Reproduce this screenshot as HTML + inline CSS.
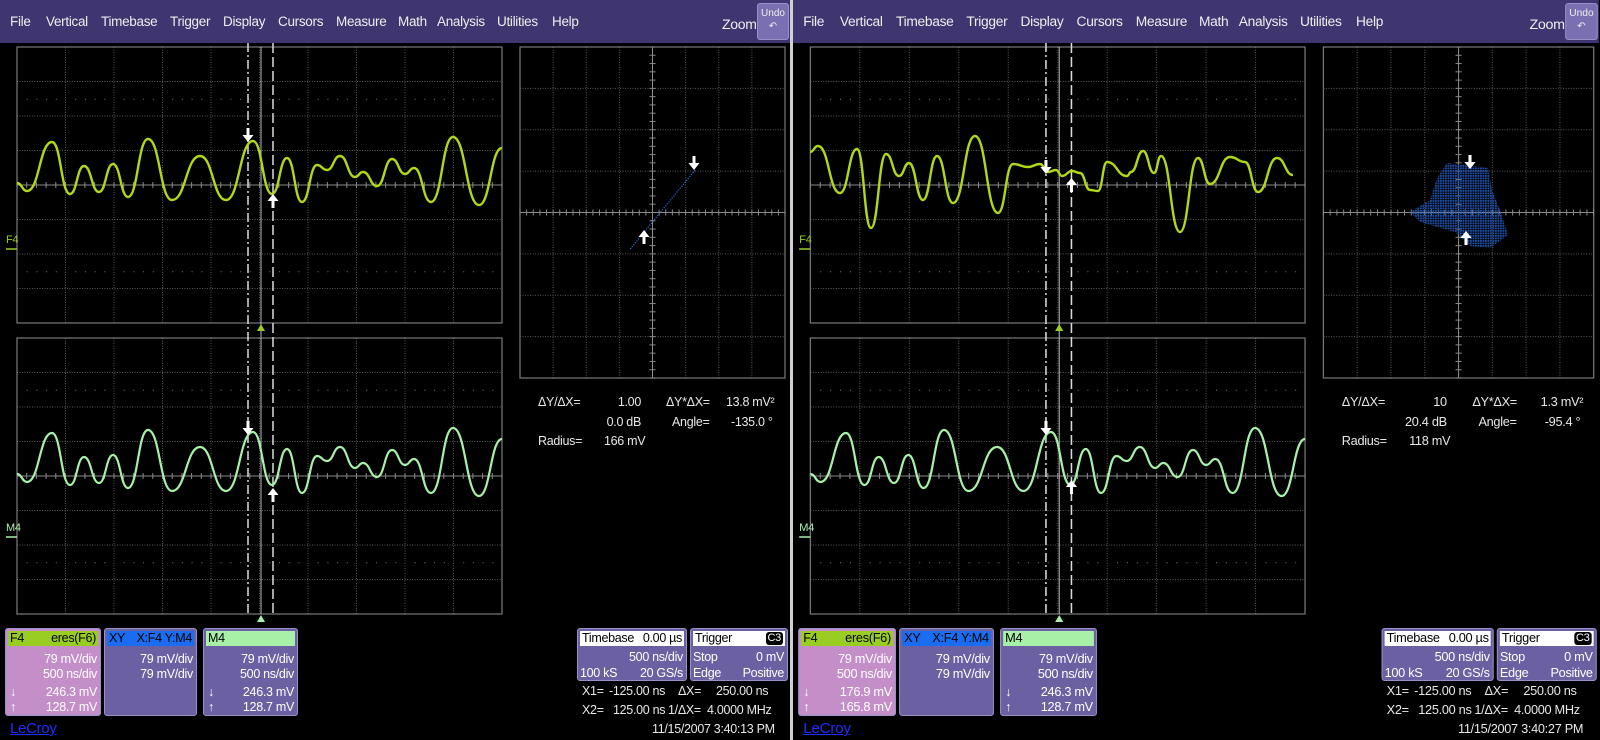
<!DOCTYPE html>
<html><head><meta charset="utf-8">
<style>
*{margin:0;padding:0;box-sizing:border-box}
body{width:1600px;height:740px;background:#000;position:relative;overflow:hidden;font-family:"Liberation Sans",sans-serif;color:#e8e8e8;letter-spacing:-0.3px}
.scr{position:absolute;top:0;width:790px;height:740px;background:#000}
.menu{position:absolute;left:0;top:0;width:790px;height:43px;background:#3f3570;font-size:13.5px;color:#eee}
.menu span{position:absolute;top:14px}
.undo{position:absolute;left:757px;top:3px;width:32px;height:37px;background:#7a6fb0;border:1px solid #9a90c8;border-radius:3px;font-size:10px;text-align:center;line-height:13px;padding-top:3px;letter-spacing:0}
svg.g{position:absolute;left:0;top:0}
.t{position:absolute;font-size:12.5px;white-space:nowrap;line-height:14px}
.box{position:absolute;border-radius:3px;border:1px solid #9a90c8}
.hd{position:absolute;left:2px;right:2px;top:2px;height:15px;font-size:12.5px;line-height:15px;color:#000}
.hd .l{position:absolute;left:2px}.hd .r{position:absolute;right:2px}
.row{position:absolute;left:4px;right:3px;font-size:12.5px;line-height:14px;color:#fff}
.row .l{position:absolute;left:0}.row .r{position:absolute;right:0}
.lc{position:absolute;left:10px;top:720px;font-size:15px;color:#1f2cff;text-decoration:underline}
</style></head><body>

<div class="scr" id="s1" style="left:0">
<svg class="g" width="790" height="740" id="g1"></svg>
<div class="menu"><span style="left:10px">File</span><span style="left:46px">Vertical</span><span style="left:101px">Timebase</span><span style="left:170px">Trigger</span><span style="left:223px">Display</span><span style="left:278px">Cursors</span><span style="left:336px">Measure</span><span style="left:398px">Math</span><span style="left:437px">Analysis</span><span style="left:497px">Utilities</span><span style="left:552px">Help</span><span style="left:722px;top:16px;font-size:14px">Zoom</span><div class="undo">Undo<br>↶</div></div>
<div class="t" style="left:6px;top:233px;color:#9acd22;font-size:11px">F4</div>
<div class="t" style="left:6px;top:521px;color:#a8f0a8;font-size:11px">M4</div>
<div class="t" style="left:538px;top:395px">ΔY/ΔX=</div><div class="t" style="left:600px;width:41px;text-align:right;top:395px">1.00</div>
<div class="t" style="left:666px;top:395px">ΔY*ΔX=</div><div class="t" style="left:726px;top:395px">13.8 mV²</div>
<div class="t" style="left:590px;width:51px;text-align:right;top:415px">0.0 dB</div>
<div class="t" style="left:672px;top:415px">Angle=</div><div class="t" style="left:731px;top:415px">-135.0 °</div>
<div class="t" style="left:538px;top:434px">Radius=</div><div class="t" style="left:604px;top:434px">166 mV</div>
<div class="box" style="left:5px;top:628px;width:96px;height:88px;background:#c48fc8"><div class="hd" style="background:#9acd22"><span class="l">F4</span><span class="r">eres(F6)</span></div>
<div class="row" style="top:23px"><span class="r">79 mV/div</span></div><div class="row" style="top:38px"><span class="r">500 ns/div</span></div>
<div class="row" style="top:56px"><span class="l">↓</span><span class="r">246.3 mV</span></div><div class="row" style="top:71px"><span class="l">↑</span><span class="r">128.7 mV</span></div></div>
<div class="box" style="left:104px;top:628px;width:93px;height:88px;background:#6b60a2"><div class="hd" style="background:#1a6cf0"><span class="l">XY</span><span class="r">X:F4 Y:M4</span></div>
<div class="row" style="top:23px"><span class="r">79 mV/div</span></div><div class="row" style="top:38px"><span class="r">79 mV/div</span></div></div>
<div class="box" style="left:203px;top:628px;width:95px;height:88px;background:#6b60a2"><div class="hd" style="background:#a8f0a8"><span class="l">M4</span></div>
<div class="row" style="top:23px"><span class="r">79 mV/div</span></div><div class="row" style="top:38px"><span class="r">500 ns/div</span></div>
<div class="row" style="top:56px"><span class="l">↓</span><span class="r">246.3 mV</span></div><div class="row" style="top:71px"><span class="l">↑</span><span class="r">128.7 mV</span></div></div>
<div class="lc">LeCroy</div>
<div class="box" style="left:577px;top:628px;width:110px;height:53px;background:#6b60a2"><div class="hd" style="background:#fff"><span class="l">Timebase</span><span class="r">0.00 µs</span></div>
<div class="row" style="left:2px;top:21px"><span class="r">500 ns/div</span></div><div class="row" style="left:2px;top:37px"><span class="l">100 kS</span><span class="r">20 GS/s</span></div></div>
<div class="box" style="left:690px;top:628px;width:98px;height:53px;background:#6b60a2"><div class="hd" style="background:#fff"><span class="l">Trigger</span><span class="r" style="background:#000;color:#fff;border-radius:3px;padding:0 2px;top:1px;line-height:13px;font-size:11px">C3</span></div>
<div class="row" style="left:2px;top:21px"><span class="l">Stop</span><span class="r">0 mV</span></div><div class="row" style="left:2px;top:37px"><span class="l">Edge</span><span class="r">Positive</span></div></div>
<div class="t" style="left:582px;top:684px">X1=</div><div class="t" style="left:609px;top:684px">-125.00 ns</div><div class="t" style="left:678px;top:684px">ΔX=</div><div class="t" style="left:716px;top:684px">250.00 ns</div>
<div class="t" style="left:582px;top:703px">X2=</div><div class="t" style="left:613px;top:703px">125.00 ns</div><div class="t" style="left:668px;top:703px">1/ΔX=</div><div class="t" style="left:707px;top:703px">4.0000 MHz</div>
<div class="t" style="left:652px;top:722px">11/15/2007 3:40:13 PM</div>
</div>

<div style="position:absolute;left:790px;top:0;width:3px;height:740px;background:#d0d0d0"></div>

<div class="scr" id="s2" style="left:793px;transform:scaleX(1.02);transform-origin:0 0">
<svg class="g" width="790" height="740" id="g2"></svg>
<div class="menu"><span style="left:10px">File</span><span style="left:46px">Vertical</span><span style="left:101px">Timebase</span><span style="left:170px">Trigger</span><span style="left:223px">Display</span><span style="left:278px">Cursors</span><span style="left:336px">Measure</span><span style="left:398px">Math</span><span style="left:437px">Analysis</span><span style="left:497px">Utilities</span><span style="left:552px">Help</span><span style="left:722px;top:16px;font-size:14px">Zoom</span><div class="undo">Undo<br>↶</div></div>
<div class="t" style="left:6px;top:233px;color:#9acd22;font-size:11px">F4</div>
<div class="t" style="left:6px;top:521px;color:#a8f0a8;font-size:11px">M4</div>
<div class="t" style="left:538px;top:395px">ΔY/ΔX=</div><div class="t" style="left:600px;width:41px;text-align:right;top:395px">10</div>
<div class="t" style="left:666px;top:395px">ΔY*ΔX=</div><div class="t" style="left:733px;top:395px">1.3 mV²</div>
<div class="t" style="left:590px;width:51px;text-align:right;top:415px">20.4 dB</div>
<div class="t" style="left:672px;top:415px">Angle=</div><div class="t" style="left:737px;top:415px">-95.4 °</div>
<div class="t" style="left:538px;top:434px">Radius=</div><div class="t" style="left:604px;top:434px">118 mV</div>
<div class="box" style="left:5px;top:628px;width:96px;height:88px;background:#c48fc8"><div class="hd" style="background:#9acd22"><span class="l">F4</span><span class="r">eres(F6)</span></div>
<div class="row" style="top:23px"><span class="r">79 mV/div</span></div><div class="row" style="top:38px"><span class="r">500 ns/div</span></div>
<div class="row" style="top:56px"><span class="l">↓</span><span class="r">176.9 mV</span></div><div class="row" style="top:71px"><span class="l">↑</span><span class="r">165.8 mV</span></div></div>
<div class="box" style="left:104px;top:628px;width:93px;height:88px;background:#6b60a2"><div class="hd" style="background:#1a6cf0"><span class="l">XY</span><span class="r">X:F4 Y:M4</span></div>
<div class="row" style="top:23px"><span class="r">79 mV/div</span></div><div class="row" style="top:38px"><span class="r">79 mV/div</span></div></div>
<div class="box" style="left:203px;top:628px;width:95px;height:88px;background:#6b60a2"><div class="hd" style="background:#a8f0a8"><span class="l">M4</span></div>
<div class="row" style="top:23px"><span class="r">79 mV/div</span></div><div class="row" style="top:38px"><span class="r">500 ns/div</span></div>
<div class="row" style="top:56px"><span class="l">↓</span><span class="r">246.3 mV</span></div><div class="row" style="top:71px"><span class="l">↑</span><span class="r">128.7 mV</span></div></div>
<div class="lc">LeCroy</div>
<div class="box" style="left:577px;top:628px;width:110px;height:53px;background:#6b60a2"><div class="hd" style="background:#fff"><span class="l">Timebase</span><span class="r">0.00 µs</span></div>
<div class="row" style="left:2px;top:21px"><span class="r">500 ns/div</span></div><div class="row" style="left:2px;top:37px"><span class="l">100 kS</span><span class="r">20 GS/s</span></div></div>
<div class="box" style="left:690px;top:628px;width:98px;height:53px;background:#6b60a2"><div class="hd" style="background:#fff"><span class="l">Trigger</span><span class="r" style="background:#000;color:#fff;border-radius:3px;padding:0 2px;top:1px;line-height:13px;font-size:11px">C3</span></div>
<div class="row" style="left:2px;top:21px"><span class="l">Stop</span><span class="r">0 mV</span></div><div class="row" style="left:2px;top:37px"><span class="l">Edge</span><span class="r">Positive</span></div></div>
<div class="t" style="left:582px;top:684px">X1=</div><div class="t" style="left:609px;top:684px">-125.00 ns</div><div class="t" style="left:678px;top:684px">ΔX=</div><div class="t" style="left:716px;top:684px">250.00 ns</div>
<div class="t" style="left:582px;top:703px">X2=</div><div class="t" style="left:613px;top:703px">125.00 ns</div><div class="t" style="left:668px;top:703px">1/ΔX=</div><div class="t" style="left:707px;top:703px">4.0000 MHz</div>
<div class="t" style="left:652px;top:722px">11/15/2007 3:40:27 PM</div>
</div>

<script>
var NS="http://www.w3.org/2000/svg";
function el(p,t,a){var e=document.createElementNS(NS,t);for(var k in a)e.setAttribute(k,a[k]);p.appendChild(e);return e;}
function grid(s,x0,y0,w,h,nx,ny,dots){
 var dx=w/nx,dy=h/ny,i,j;
 for(i=1;i<nx;i++)el(s,'line',{x1:x0+i*dx,y1:y0,x2:x0+i*dx,y2:y0+h,stroke:'#5a5a5a','stroke-dasharray':'1 1.5'});
 for(j=1;j<ny;j++)el(s,'line',{x1:x0,y1:y0+j*dy,x2:x0+w,y2:y0+j*dy,stroke:'#5a5a5a','stroke-dasharray':'1 1.5'});
 el(s,'rect',{x:x0,y:y0,width:w,height:h,fill:'none',stroke:'#7a7a7a','stroke-width':1.2});
 var cy=y0+h/2,cx=x0+w/2;
 el(s,'line',{x1:x0,y1:cy,x2:x0+w,y2:cy,stroke:'#8a8a8a'});
 for(i=0;i<=nx*5;i++)el(s,'line',{x1:x0+i*dx/5,y1:cy-3,x2:x0+i*dx/5,y2:cy+3,stroke:'#8a8a8a'});
 if(dots){[1.5,6.5].forEach(function(r){for(i=0;i<nx;i++)for(j=1;j<5;j++)el(s,'rect',{x:x0+i*dx+j*dx/5,y:y0+r*dy,width:1,height:1,fill:'#777'});});}
 else{el(s,'line',{x1:cx,y1:y0,x2:cx,y2:y0+h,stroke:'#8a8a8a'});
 for(j=0;j<=ny*5;j++)el(s,'line',{x1:cx-3,y1:y0+j*dy/5,x2:cx+3,y2:y0+j*dy/5,stroke:'#8a8a8a'});}
}
function smooth(pts,off){var d='M'+pts[0][0]+' '+(pts[0][1]+off);
 for(var i=1;i<pts.length;i++){var p0=pts[i-1],p1=pts[i],mx=(p0[0]+p1[0])/2;d+=' C'+mx+' '+(p0[1]+off)+' '+mx+' '+(p1[1]+off)+' '+p1[0]+' '+(p1[1]+off);}return d;}
function arrow(s,x,y,down){var d=down?'M'+(x-1.5)+' '+(y-12)+'h3v7h4l-5.5 7-5.5-7h4z':'M'+(x-1.5)+' '+(y+12)+'h3v-7h4l-5.5-7-5.5 7h4z';el(s,'path',{d:d,fill:'#fff'});}
function cursors(s){
 el(s,'line',{x1:248,y1:43,x2:248,y2:614,stroke:'#ddd','stroke-width':1.5,'stroke-dasharray':'9 3 2 3'});
 el(s,'line',{x1:261,y1:47,x2:261,y2:614,stroke:'#bbb','stroke-width':1});
 el(s,'line',{x1:273,y1:43,x2:273,y2:614,stroke:'#ddd','stroke-width':1.5,'stroke-dasharray':'10 4'});
 el(s,'path',{d:'M261 324l-4 7h8z',fill:'#9acd22'});
 el(s,'path',{d:'M261 615l-4 7h8z',fill:'#a8f0a8'});
 el(s,'line',{x1:6,y1:249,x2:17,y2:249,stroke:'#9acd22','stroke-width':1.5});
 el(s,'line',{x1:6,y1:537,x2:17,y2:537,stroke:'#a8f0a8','stroke-width':1.5});
}
var wA=[[17,183],[27,191],[52,142],[70,194],[84,166],[99,192],[113,164],[128,197],[148,139],[172,200],[200,156],[226,200],[253,141],[272,194],[287,158],[302,202],[317,165],[327,170],[340,156],[355,177],[363,172],[377,186],[392,159],[405,174],[414,168],[431,202],[453,137],[479,205],[502,148]];
var wR=[[810,152],[818,146],[840,193],[857,149],[871,228],[886,154],[899,176],[909,163],[923,200],[937,156],[953,203],[975,136],[998,213],[1013,164],[1028,167],[1040,164],[1048,172],[1056,170],[1062,176],[1072,171],[1080,173],[1090,190],[1098,191],[1107,162],[1127,176],[1131,172],[1143,151],[1154,173],[1161,156],[1180,232],[1198,158],[1210,184],[1230,157],[1245,162],[1258,192],[1277,158],[1293,175]];
[['g1',1],['g2',2]].forEach(function(a){var s=document.getElementById(a[0]);
 grid(s,17,47,485,276,10,8,true);grid(s,17,338,485,276,10,8,true);grid(s,520,47,265,331,8,8,false);
 cursors(s);
 el(s,'path',{d:smooth(wA,291),fill:'none',stroke:'#a8f0a8','stroke-width':2.2});
 if(a[1]==1){
  el(s,'path',{d:smooth(wA,0),fill:'none',stroke:'#b0d818','stroke-width':2.4});
  arrow(s,248,140,true);arrow(s,273,196,false);arrow(s,248,433,true);arrow(s,273,490,false);
  for(var i=0;i<=40;i++)el(s,'rect',{x:630+i*1.6,y:248-i*1.95,width:1.2,height:1.2,fill:'#2a6ad8'});
  arrow(s,694,168,true);arrow(s,644,232,false);
 }else{
  el(s,'path',{d:smooth(wR,0),fill:'none',stroke:'#b0d818','stroke-width':2.4,transform:'matrix(0.98039,0,0,1,-777.45,0)'});
  arrow(s,248,172,true);arrow(s,273,180,false);arrow(s,248,433,true);arrow(s,273,482,false);
  var def=el(s,'defs',{});var pt=el(def,'pattern',{id:'bp',width:2.5,height:2.5,patternUnits:'userSpaceOnUse'});
  el(pt,'rect',{width:1.8,height:1.8,fill:'#1d4fa8'});
  el(s,'path',{d:'M1447 163L1488 168L1492 190L1500 210L1508 235L1490 248L1470 246L1455 232L1420 222L1410 212L1430 200L1437 178Z',fill:'url(#bp)',transform:'matrix(0.98039,0,0,1,-777.45,0)'});
  arrow(s,(1470-793)/1.02,167,true);arrow(s,(1466-793)/1.02,233,false);
 }
});
</script>
</body></html>
